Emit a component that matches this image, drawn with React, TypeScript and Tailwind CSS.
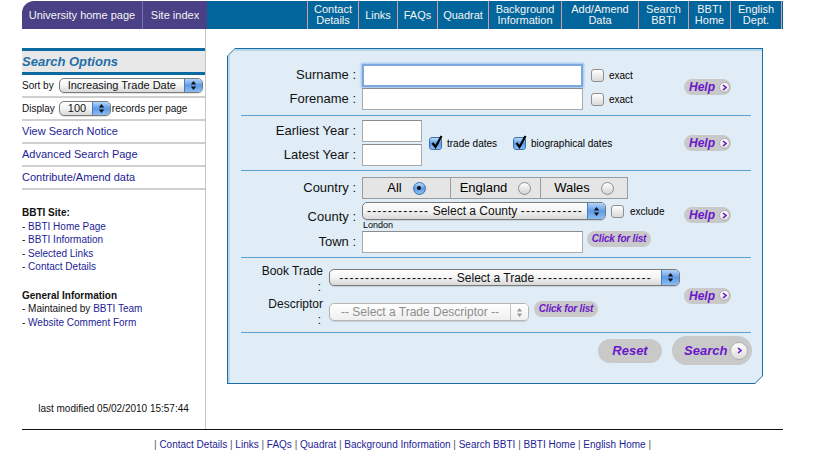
import React from 'react';

const purple = 'text-[#6b17c9]';

const Arrows: React.FC<{ color?: string }> = ({ color = '#111' }) => (
  <svg width="7" height="11" viewBox="0 0 7 11">
    <path d="M3.5 1 L6.2 4.4 H0.8Z M3.5 10 L6.2 6.6 H0.8Z" fill={color} />
  </svg>
);

const AquaSelect: React.FC<{ className: string; children: React.ReactNode; left?: boolean; disabled?: boolean }> = ({
  className,
  children,
  left,
  disabled,
}) => (
  <div
    className={`flex overflow-hidden rounded-[5px] border bg-linear-to-b shadow-[0_1px_1px_rgba(0,0,0,0.12)] ${
      disabled ? 'border-[#b5b5b5] from-white to-[#efefef]' : 'border-[#7b7b7b] from-white via-[#f3f3f3] to-[#d9d9d9]'
    } ${className}`}
  >
    <div
      className={`flex flex-1 items-center overflow-hidden whitespace-nowrap ${left ? 'pl-[8px]' : 'justify-center'} ${
        disabled ? 'text-[#8d8d8d]' : 'text-[#111]'
      }`}
    >
      {children}
    </div>
    <div
      className={`flex w-[18px] items-center justify-center border-l bg-linear-to-b ${
        disabled ? 'border-[#c4c4c4] from-white to-[#efefef]' : 'border-[#4a7cc0] from-[#b3d5f7] via-[#5d9be6] to-[#8cbdf1]'
      }`}
    >
      <Arrows color={disabled ? '#9a9a9a' : '#111'} />
    </div>
  </div>
);

const Checkbox: React.FC<{ checked?: boolean }> = ({ checked }) =>
  checked ? (
    <div className="relative h-[13px] w-[13px] shrink-0 rounded-[3px] border border-[#3d6fae] bg-linear-to-b from-[#bcdcfa] via-[#5a9ae5] to-[#8cc0f2]">
      <svg className="absolute left-[1px] top-[-3px]" width="12" height="14" viewBox="0 0 12 14">
        <path d="M1.5 8 L4.5 12 L10.5 1" fill="none" stroke="#000" strokeWidth="2.2" />
      </svg>
    </div>
  ) : (
    <div className="h-[13px] w-[13px] shrink-0 rounded-[3px] border border-[#8e8e8e] bg-linear-to-b from-white to-[#dadada]" />
  );

const Radio: React.FC<{ checked?: boolean }> = ({ checked }) =>
  checked ? (
    <div className="flex h-[13px] w-[13px] items-center justify-center rounded-full border border-[#3d6fae] bg-linear-to-b from-[#bcdcfa] via-[#5a9ae5] to-[#8cc0f2]">
      <div className="h-[4px] w-[4px] rounded-full bg-[#111]" />
    </div>
  ) : (
    <div className="h-[13px] w-[13px] rounded-full border border-[#8e8e8e] bg-linear-to-b from-white to-[#d2d2d2]" />
  );

const Chevron: React.FC<{ size: string }> = ({ size }) => (
  <div className={`flex shrink-0 items-center justify-center rounded-full border border-[#b0b0b0] bg-linear-to-b from-white to-[#dcdcdc] ${size}`}>
    <svg width="5" height="7" viewBox="0 0 5 7">
      <path d="M1 1 L4 3.5 L1 6" fill="none" stroke="#6b17c9" strokeWidth="1.6" />
    </svg>
  </div>
);

const HelpBtn: React.FC = () => (
  <div className="mr-[20px] flex h-[16px] w-[47px] shrink-0 items-center gap-[4px] rounded-full bg-[#c9c9c9] pl-[5px]">
    <span className={`text-[12px] font-bold italic leading-none ${purple}`}>Help</span>
    <Chevron size="h-[11px] w-[11px]" />
  </div>
);

const ListBtn: React.FC<{ className?: string }> = ({ className = '' }) => (
  <div className={`flex h-[16px] w-[64px] shrink-0 items-center justify-center rounded-full bg-[#c9c9c9] ${className}`}>
    <span className={`text-[10px] font-bold italic leading-none tracking-[-0.2px] ${purple}`}>Click for list</span>
  </div>
);

const TextInput: React.FC<{ className: string; focus?: boolean }> = ({ className, focus }) => (
  <div
    className={`bg-white ${className} ${
      focus
        ? 'border-2 border-[#7ea7dd] shadow-[0_0_2px_1px_#9cc0ee]'
        : 'border border-[#aaaaaa] border-t-[#8c8c8c]'
    }`}
  />
);

const Label: React.FC<{ children: React.ReactNode }> = ({ children }) => (
  <div className="w-[115px] shrink-0 text-right text-[13px] text-[#111]">{children}</div>
);

// the dashed filler in the select boxes is a bit wider than plain hyphens
const Dashes: React.FC<{ n: number }> = ({ n }) => (
  <span className="tracking-[1.2px]">{'-'.repeat(n)}</span>
);

const navItems = [
  { t: ['Contact', 'Details'], w: 'w-[51px]' },
  { t: ['Links'], w: 'w-[39px]' },
  { t: ['FAQs'], w: 'w-[40px]' },
  { t: ['Quadrat'], w: 'w-[51px]' },
  { t: ['Background', 'Information'], w: 'w-[73px]' },
  { t: ['Add/Amend', 'Data'], w: 'w-[77px]' },
  { t: ['Search', 'BBTI'], w: 'w-[50px]' },
  { t: ['BBTI', 'Home'], w: 'w-[42px]' },
  { t: ['English', 'Dept.'], w: 'w-[52px]' },
];

const footerLinks = [
  'Contact Details',
  'Links',
  'FAQs',
  'Quadrat',
  'Background Information',
  'Search BBTI',
  'BBTI Home',
  'English Home',
];

export default function App() {
  return (
    <div className="h-[467px] w-[813px] overflow-hidden bg-white font-['Liberation_Sans',Arial,sans-serif]">
      <div className="ml-[22px] w-[761px]">
        {/* top navigation */}
        <div className="mt-px flex h-[28px] text-[11px] leading-[11px] text-[#f4f4f4]">
          <div className="flex w-[185px] overflow-hidden rounded-tl-[12px] bg-[#4a4086]">
            <div className="flex w-[121px] items-center justify-center border-r border-[#7a70b0]">University home page</div>
            <div className="flex flex-1 items-center justify-center">Site index</div>
          </div>
          <div className="flex flex-1 bg-[#02659b]">
            <div className="w-[100px]" />
            {navItems.map((n, i) => (
              <div
                key={i}
                className={`flex flex-col items-center justify-center border-l border-[#d09ba4] text-center ${n.w} ${
                  i === navItems.length - 1 ? 'border-r' : ''
                }`}
              >
                {n.t.map((l) => (
                  <span key={l}>{l}</span>
                ))}
              </div>
            ))}
          </div>
        </div>

        {/* body */}
        <div className="flex h-[400px]">
          {/* sidebar */}
          <div className="flex w-[184px] shrink-0 flex-col border-r border-[#c6c6c6] pt-[19px] text-[#111]">
            <div className="flex h-[27px] items-center border-y-[3px] border-[#0b6aa2] bg-[#e8e8e8]">
              <span className="text-[13px] font-bold italic text-[#1f6fa6]">Search Options</span>
            </div>
            <div className="flex h-[23px] items-center border-b-2 border-[#cfcfcf] text-[10px]">
              <span>Sort by</span>
              <AquaSelect className="ml-[5px] h-[15px] w-[144px] text-[11px]" left>
                Increasing Trade Date
              </AquaSelect>
            </div>
            <div className="flex h-[23px] items-center border-b-2 border-[#cfcfcf] text-[10px]">
              <span>Display</span>
              <AquaSelect className="ml-[4px] h-[15px] w-[52px] text-[11px]" left>
                100
              </AquaSelect>
              <span className="ml-[1px]">records per page</span>
            </div>
            {['View Search Notice', 'Advanced Search Page', 'Contribute/Amend data'].map((l) => (
              <div key={l} className="flex h-[23px] items-center border-b-2 border-[#cfcfcf] text-[11px] text-[#1d1d96]">
                {l}
              </div>
            ))}
            <div className="mt-[16px] text-[10px] leading-[13.5px]">
              <div className="font-bold">BBTI Site:</div>
              {['BBTI Home Page', 'BBTI Information', 'Selected Links', 'Contact Details'].map((l) => (
                <div key={l}>
                  - <span className="text-[#1d1d96]">{l}</span>
                </div>
              ))}
            </div>
            <div className="mt-[15px] text-[10px] leading-[13.5px]">
              <div className="font-bold">General Information</div>
              <div>
                - Maintained by <span className="text-[#1d1d96]">BBTI Team</span>
              </div>
              <div>
                - <span className="text-[#1d1d96]">Website Comment Form</span>
              </div>
            </div>
            <div className="mt-auto pb-[13px] text-center text-[10px]">last modified 05/02/2010 15:57:44</div>
          </div>

          {/* search panel */}
          <div className="ml-[21px] mt-[19px] h-[336px] w-[536px] bg-[#1c6ea4] [clip-path:polygon(8px_0,100%_0,100%_calc(100%-8px),calc(100%-8px)_100%,0_100%,0_8px)]">
            <div className="m-px flex h-[334px] flex-col border-l-2 border-t-2 border-[#b6d6ee] bg-[#e0edf7] [clip-path:polygon(7px_0,100%_0,100%_calc(100%-7px),calc(100%-7px)_100%,0_100%,0_7px)]">
              {/* names */}
              <div className="mx-[11px] flex items-center border-b border-[#5d9fcf] pb-[5px] pt-[13px]">
                <div className="flex flex-1 flex-col gap-[2px]">
                  <div className="flex h-[22px] items-center">
                    <Label>Surname :</Label>
                    <TextInput className="ml-[6px] h-[23px] w-[221px]" focus />
                    <div className="ml-[8px]">
                      <Checkbox />
                    </div>
                    <span className="ml-[5px] text-[10px]">exact</span>
                  </div>
                  <div className="flex h-[22px] items-center">
                    <Label>Forename :</Label>
                    <TextInput className="ml-[6px] h-[22px] w-[221px]" />
                    <div className="ml-[8px]">
                      <Checkbox />
                    </div>
                    <span className="ml-[5px] text-[10px]">exact</span>
                  </div>
                </div>
                <HelpBtn />
              </div>

              {/* years */}
              <div className="mx-[11px] flex items-center border-b border-[#5d9fcf] py-[4px]">
                <div className="flex flex-1 items-center">
                  <div className="flex flex-col gap-[2px]">
                    <div className="flex h-[22px] items-center">
                      <Label>Earliest Year :</Label>
                      <TextInput className="ml-[6px] h-[22px] w-[60px]" />
                    </div>
                    <div className="flex h-[22px] items-center">
                      <Label>Latest Year :</Label>
                      <TextInput className="ml-[6px] h-[22px] w-[60px]" />
                    </div>
                  </div>
                  <div className="ml-[7px]">
                    <Checkbox checked />
                  </div>
                  <span className="ml-[5px] text-[10px]">trade dates</span>
                  <div className="ml-[16px]">
                    <Checkbox checked />
                  </div>
                  <span className="ml-[5px] text-[10px]">biographical dates</span>
                </div>
                <HelpBtn />
              </div>

              {/* place */}
              <div className="mx-[11px] flex items-center border-b border-[#5d9fcf] pb-[4px] pt-[6px]">
                <div className="flex flex-1 flex-col">
                  <div className="flex h-[22px] items-center">
                    <Label>Country :</Label>
                    <div className="ml-[6px] flex h-[22px] w-[266px] border border-[#9b9b9b] bg-[#e5e5e5] text-[13px]">
                      {[
                        { l: 'All', w: 'w-[87px]', c: true },
                        { l: 'England', w: 'w-[90px]', c: false },
                        { l: 'Wales', w: 'flex-1', c: false },
                      ].map((c, i) => (
                        <div
                          key={c.l}
                          className={`flex items-center justify-center gap-[11px] ${c.w} ${i > 0 ? 'border-l border-[#9b9b9b]' : ''}`}
                        >
                          <span>{c.l}</span>
                          <Radio checked={c.c} />
                        </div>
                      ))}
                    </div>
                  </div>
                  <div className="mt-[3px] flex items-center">
                    <Label>County :</Label>
                    <div className="ml-[6px] flex flex-col">
                      <div className="flex items-center">
                        <AquaSelect className="h-[18px] w-[244px] text-[12px]">
                          <Dashes n={12} />
                          &nbsp;Select a County&nbsp;
                          <Dashes n={12} />
                        </AquaSelect>
                        <div className="ml-[5px]">
                          <Checkbox />
                        </div>
                        <span className="ml-[6px] text-[10px]">exclude</span>
                      </div>
                      <div className="h-[11px] pl-px text-[9px] leading-[11px]">London</div>
                    </div>
                  </div>
                  <div className="flex items-start">
                    <div className="flex h-[22px] items-center">
                      <Label>Town :</Label>
                    </div>
                    <TextInput className="ml-[6px] h-[22px] w-[221px]" />
                    <ListBtn className="ml-[4px]" />
                  </div>
                </div>
                <HelpBtn />
              </div>

              {/* trade */}
              <div className="mx-[11px] flex items-center border-b border-[#5d9fcf] pb-[4px] pt-[5px]">
                <div className="flex flex-1 flex-col gap-px">
                  <div className="flex h-[32px] items-start">
                    <div className="w-[82px] shrink-0 text-right text-[12px] leading-[16px] text-[#111]">
                      <div>Book Trade</div>
                      <div className="pr-[2px]">:</div>
                    </div>
                    <AquaSelect className="ml-[6px] mt-[6px] h-[17px] w-[351px] text-[12px]">
                      <Dashes n={22} />
                      &nbsp;Select a Trade&nbsp;
                      <Dashes n={22} />
                    </AquaSelect>
                  </div>
                  <div className="flex h-[32px] items-start">
                    <div className="w-[82px] shrink-0 text-right text-[12px] leading-[16px] text-[#111]">
                      <div>Descriptor</div>
                      <div className="pr-[2px]">:</div>
                    </div>
                    <AquaSelect className="ml-[6px] mt-[7px] h-[18px] w-[200px] text-[12px]" disabled>
                      -- Select a Trade Descriptor --
                    </AquaSelect>
                    <ListBtn className="ml-[5px] mt-[5px]" />
                  </div>
                </div>
                <HelpBtn />
              </div>

              {/* buttons */}
              <div className="flex items-center justify-end gap-[10px] pr-[10px] pt-[3px]">
                <div className="flex h-[24px] w-[64px] items-center justify-center rounded-full bg-[#c9c9c9]">
                  <span className={`text-[13px] font-bold italic ${purple}`}>Reset</span>
                </div>
                <div className="flex h-[29px] w-[80px] items-center justify-between rounded-full bg-[#c9c9c9] pl-[12px] pr-[4px]">
                  <span className={`text-[13px] font-bold italic ${purple}`}>Search</span>
                  <Chevron size="h-[18px] w-[18px]" />
                </div>
              </div>
            </div>
          </div>
        </div>

        {/* footer */}
        <div className="border-t border-[#111] pt-[9px] text-center text-[10px] leading-[12px] text-[#1d1d96]">
          <span className="text-[#555]">| </span>
          {footerLinks.map((l) => (
            <React.Fragment key={l}>
              {l}
              <span className="text-[#555]"> | </span>
            </React.Fragment>
          ))}
        </div>
      </div>
    </div>
  );
}
